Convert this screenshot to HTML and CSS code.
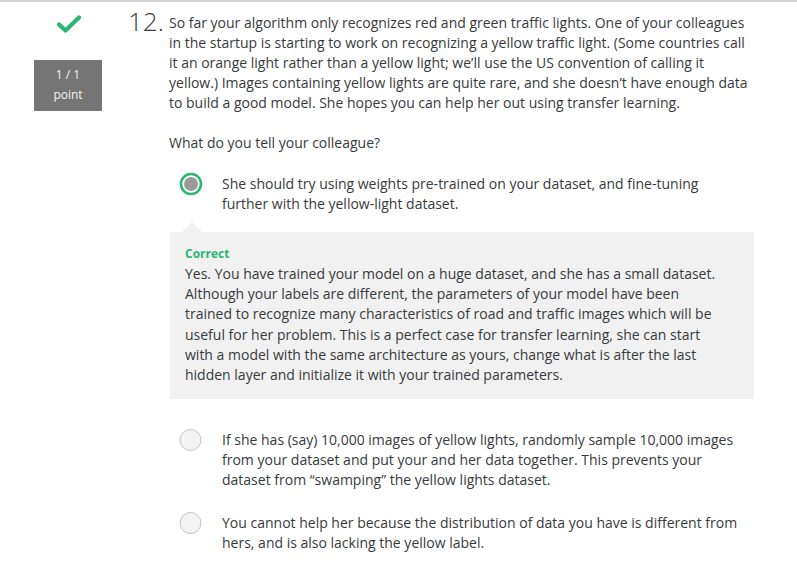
FILE: index.html
```html
<!DOCTYPE html>
<html lang="en">
<head>
<meta charset="utf-8">
<title>Quiz question 12</title>
<link rel="stylesheet" href="styles.css">
</head>
<body>
<div class="question">
  <div class="status">
    <svg class="check" width="24" height="18" viewBox="0 0 24 18" aria-hidden="true">
      <path d="M2 9.5 L8.5 15.5 L22 2.5" fill="none" stroke="#2bb673" stroke-width="4.2" stroke-linecap="round" stroke-linejoin="round"/>
    </svg>
    <div class="score">
      <div>1 / 1</div>
      <div>point</div>
    </div>
  </div>
  <div class="number">12.</div>
  <div class="content">
    <p class="prompt">So far your algorithm only recognizes red and green traffic lights. One of your colleagues in the startup is starting to work on recognizing a yellow traffic light. (Some countries call it an orange light rather than a yellow light; we’ll use the US convention of calling it yellow.) Images containing yellow lights are quite rare, and she doesn’t have enough data to build a good model. She hopes you can help her out using transfer learning.</p>
    <p class="ask">What do you tell your colleague?</p>

    <div class="option selected">
      <svg class="radio" width="24" height="24" viewBox="0 0 24 24" aria-hidden="true">
        <circle cx="12" cy="12" r="10" fill="#fff" stroke="#2bb673" stroke-width="2.6"/>
        <circle cx="12" cy="12" r="7" fill="#9a9a9a"/>
      </svg>
      <div class="option-text">She should try using weights pre-trained on your dataset, and fine-tuning further with the yellow-light dataset.</div>
    </div>

    <div class="feedback">
      <div class="feedback-title">Correct</div>
      <div class="feedback-text">Yes. You have trained your model on a huge dataset, and she has a small dataset. Although your labels are different, the parameters of your model have been trained to recognize many characteristics of road and traffic images which will be useful for her problem. This is a perfect case for transfer learning, she can start with a model with the same architecture as yours, change what is after the last hidden layer and initialize it with your trained parameters.</div>
    </div>

    <div class="option second">
      <svg class="radio" width="24" height="24" viewBox="0 0 24 24" aria-hidden="true">
        <circle cx="11.5" cy="12" r="10.5" fill="#f3f3f3" stroke="#c4c4c4" stroke-width="1"/>
      </svg>
      <div class="option-text">If she has (say) 10,000 images of yellow lights, randomly sample 10,000 images from your dataset and put your and her data together. This prevents your dataset from “swamping” the yellow lights dataset.</div>
    </div>

    <div class="option third">
      <svg class="radio" width="24" height="24" viewBox="0 0 24 24" aria-hidden="true">
        <circle cx="11.5" cy="12" r="10.5" fill="#f3f3f3" stroke="#c4c4c4" stroke-width="1"/>
      </svg>
      <div class="option-text">You cannot help her because the distribution of data you have is different from hers, and is also lacking the yellow label.</div>
    </div>
  </div>
</div>
</body>
</html>
```

FILE: styles.css
```css
html, body {
  margin: 0;
  padding: 0;
  background: #fff;
}

body {
  font-family: "Open Sans", "Liberation Sans", sans-serif;
  font-size: 14px;
  line-height: 20px;
  color: #373a3c;
  border-top: 2px solid #d4d4d4;
}

.question {
  display: flex;
  align-items: flex-start;
}

.status {
  width: 68px;
  margin-left: 34px;
  display: flex;
  flex-direction: column;
  align-items: center;
}

.check {
  display: block;
  margin-top: 13px;
  margin-left: 1px;
}

.score {
  margin-top: 27px;
  width: 68px;
  height: 51px;
  box-sizing: border-box;
  padding-top: 5px;
  background: #757575;
  color: #f2f2f2;
  font-size: 12px;
  line-height: 20px;
  text-align: center;
}

.number {
  width: 41px;
  margin-left: 26px;
  margin-top: 5px;
  font-size: 26px;
  font-weight: 300;
  line-height: 28px;
  color: #373a3c;
}

.content {
  width: 585px;
  padding-top: 11px;
}

.prompt {
  margin: 0;
}

.ask {
  margin: 20px 0 0;
}

.option {
  display: flex;
  align-items: flex-start;
  margin-left: 10px;
}

.radio {
  flex: none;
  display: block;
  margin-top: -2px;
  margin-right: 19px;
}

.option-text {
  width: 523px;
}

.selected {
  margin-top: 21px;
}

.second {
  margin-top: 31px;
}

.third {
  margin-top: 23px;
}

.feedback {
  position: relative;
  margin-top: 18px;
  margin-left: 1px;
  width: 584px;
  box-sizing: border-box;
  padding: 12px 29px 14px 15px;
  background: #f1f1f1;
}

.feedback::before {
  content: "";
  position: absolute;
  top: -10px;
  left: 12px;
  border-left: 10px solid transparent;
  border-right: 10px solid transparent;
  border-bottom: 10px solid #f1f1f1;
}

.feedback-title {
  font-size: 12px;
  font-weight: 700;
  line-height: 20px;
  color: #2bb673;
}

.feedback-text {
  line-height: 20.2px;
}
```
